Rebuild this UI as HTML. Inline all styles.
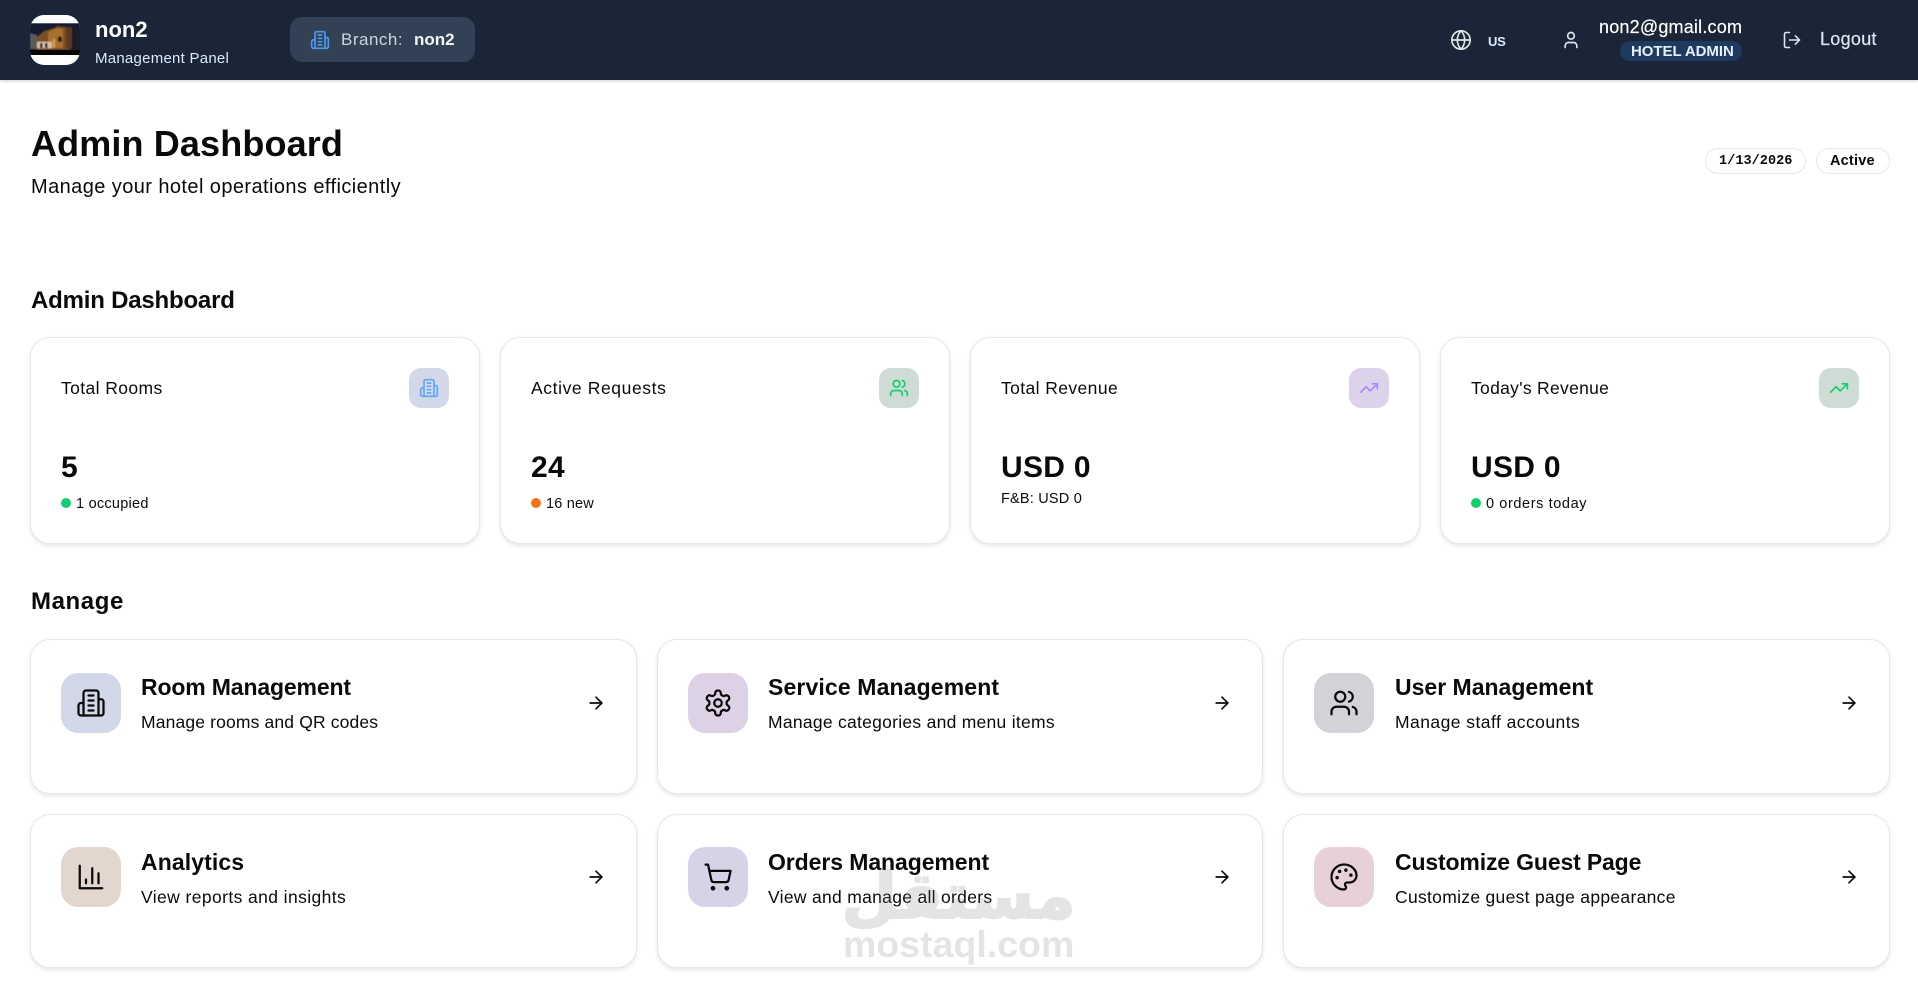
<!DOCTYPE html>
<html lang="en">
<head>
<meta charset="utf-8">
<title>Admin Dashboard</title>
<style>
*{box-sizing:border-box}
html,body{margin:0;padding:0;background:#fff}
body{position:relative;width:1918px;height:985px;overflow:hidden;font-family:"Liberation Sans",sans-serif;color:#0a0a0a}
.t{position:absolute;white-space:nowrap;line-height:1}
.b{font-weight:700}
.hdr{position:absolute;left:0;top:0;width:1918px;height:80px;background:#1a2537;box-shadow:0 1px 3px rgba(0,0,0,.2)}
.pill{position:absolute;left:290px;top:17px;width:185px;height:45px;background:#334155;border-radius:12px}
.badge{position:absolute;left:1620px;top:41px;width:122px;height:20px;background:#1e3a5f;border-radius:10px}
.tag{position:absolute;top:148px;height:26px;border:1px solid #e5e7eb;border-radius:13px;background:#fff}
.card{position:absolute;background:#fff;border:1px solid #e5e7eb;border-radius:20px;box-shadow:0 2px 4px rgba(0,0,0,.1)}
.si{position:absolute;top:368px;width:40px;height:40px;border-radius:12px}
.mi{position:absolute;width:60px;height:60px;border-radius:17px}
.dot{position:absolute;top:498px;width:10px;height:10px;border-radius:50%}
svg.i{position:absolute;fill:none;stroke:currentColor;stroke-linecap:round;stroke-linejoin:round}
.wm{position:absolute;white-space:nowrap;line-height:1;color:#7d7d7d;opacity:.2;font-weight:700}
</style>
</head>
<body>
<svg width="0" height="0" style="position:absolute">
<defs>
<g id="bld"><path d="M6 22V4a2 2 0 0 1 2-2h8a2 2 0 0 1 2 2v18Z"/><path d="M6 12H4a2 2 0 0 0-2 2v6a2 2 0 0 0 2 2h2"/><path d="M18 9h2a2 2 0 0 1 2 2v9a2 2 0 0 1-2 2h-2"/><path d="M10 6h4"/><path d="M10 10h4"/><path d="M10 14h4"/><path d="M10 18h4"/></g>
<g id="usr"><path d="M16 21v-2a4 4 0 0 0-4-4H6a4 4 0 0 0-4 4v2"/><circle cx="9" cy="7" r="4"/><path d="M22 21v-2a4 4 0 0 0-3-3.87"/><path d="M16 3.13a4 4 0 0 1 0 7.75"/></g>
<g id="trd"><polyline points="22 7 13.5 15.5 8.5 10.5 2 17"/><polyline points="16 7 22 7 22 13"/></g>
<g id="arr"><path d="M5 12h14"/><path d="m12 5 7 7-7 7"/></g>
</defs>
</svg>

<div class="hdr"></div>
<svg style="position:absolute;left:30px;top:15px" width="50" height="50" viewBox="0 0 50 50">
<defs>
<clipPath id="lc"><rect width="50" height="50" rx="14"/></clipPath>
<filter id="lb"><feGaussianBlur stdDeviation=".5"/></filter>
</defs>
<g clip-path="url(#lc)">
<rect width="50" height="50" fill="#fff"/>
<rect y="8.3" width="50" height="31.7" fill="#141b33"/>
<g filter="url(#lb)">
<path d="M7 22 L14 16 L24 13 L28 11 L36 12 L40 15 L40 35 L7 35Z" fill="#7a4e24"/>
<path d="M18 17 L27 13 L33 14 L33 33 L18 33Z" fill="#a8702f"/>
<path d="M36 12 L42 12 L42 34 L36 34Z" fill="#5c3b22"/>
<path d="M0 18 L7 20 L7 34 L0 34Z" fill="#5a5a58"/>
<rect x="7" y="26.7" width="15" height="6.6" fill="#cfc0a4"/>
<rect x="10" y="28" width="2.5" height="5" fill="#3a3028"/>
<rect x="15" y="28" width="2.5" height="5" fill="#3a3028"/>
<rect x="28" y="21.7" width="3.7" height="5" fill="#241c18"/>
<rect x="23" y="24" width="2" height="9" fill="#d9a052"/>
<rect x="44" y="14" width="6" height="22" fill="#1c1a2c"/>
</g>
<rect x="0" y="35" width="50" height="5" fill="#090705"/>
</g>
</svg>
<div class="t b" style="left:95px;top:19px;font-size:22px;color:#fff">non2</div>
<div class="t" style="left:95px;top:50.5px;font-size:15px;letter-spacing:.25px;color:#dbeafe">Management Panel</div>

<div class="pill"></div>
<svg class="i" style="left:310px;top:30px;color:#4a9bf0" width="20" height="20" viewBox="0 0 24 24" stroke-width="2"><use href="#bld"/></svg>
<div class="t" style="left:341px;top:31px;font-size:17px;letter-spacing:.5px;color:#cbd5e1">Branch:</div>
<div class="t b" style="left:414px;top:31px;font-size:17px;color:#f1f5f9">non2</div>

<svg class="i" style="left:1450px;top:29px;color:#dce8e4" width="22" height="22" viewBox="0 0 24 24" stroke-width="1.8"><circle cx="12" cy="12" r="10"/><path d="M12 2a14.5 14.5 0 0 0 0 20 14.5 14.5 0 0 0 0-20"/><path d="M2 12h20"/></svg>
<div class="t b" style="left:1488px;top:35px;font-size:13px;letter-spacing:-.3px;color:#dbeafe">US</div>
<svg class="i" style="left:1561px;top:30px;color:#dce4ec" width="20" height="20" viewBox="0 0 24 24" stroke-width="2"><path d="M19 21v-2a4 4 0 0 0-4-4H9a4 4 0 0 0-4 4v2"/><circle cx="12" cy="7" r="4"/></svg>
<div class="t" style="left:1599px;top:18px;font-size:18px;letter-spacing:.2px;color:#fff;-webkit-text-stroke:.2px #fff">non2@gmail.com</div>
<div class="badge"></div>
<div class="t b" style="left:1631px;top:43.5px;font-size:15px;letter-spacing:-.05px;color:#e6f0fa">HOTEL ADMIN</div>
<svg class="i" style="left:1782px;top:30px;color:#dce4ec" width="20" height="20" viewBox="0 0 24 24" stroke-width="1.9"><path d="M9 21H5a2 2 0 0 1-2-2V5a2 2 0 0 1 2-2h4"/><polyline points="16 17 21 12 16 7"/><line x1="21" y1="12" x2="9" y2="12"/></svg>
<div class="t" style="left:1820px;top:30px;font-size:18px;letter-spacing:.3px;color:#e2e8f0;-webkit-text-stroke:.2px #e2e8f0">Logout</div>

<div class="t b" style="left:31px;top:126px;font-size:36px;letter-spacing:.13px">Admin Dashboard</div>
<div class="t" style="left:31px;top:176.5px;font-size:20px;letter-spacing:.42px">Manage your hotel operations efficiently</div>
<div class="tag" style="left:1705px;width:101px"></div>
<div class="t b" style="left:1719px;top:155px;font-size:13.6px;font-family:'Liberation Mono',monospace">1/13/2026</div>
<div class="tag" style="left:1816px;width:74px"></div>
<div class="t b" style="left:1830px;top:154px;font-size:14.5px;letter-spacing:.2px">Active</div>

<div class="t b" style="left:31px;top:289px;font-size:24px;letter-spacing:-.2px">Admin Dashboard</div>

<div class="card" style="left:30px;top:337px;width:450px;height:207px"></div>
<div class="card" style="left:500px;top:337px;width:450px;height:207px"></div>
<div class="card" style="left:970px;top:337px;width:450px;height:207px"></div>
<div class="card" style="left:1440px;top:337px;width:450px;height:207px"></div>

<div class="t" style="left:61px;top:380px;font-size:17.5px;letter-spacing:.4px">Total Rooms</div>
<div class="t" style="left:531px;top:380px;font-size:17.5px;letter-spacing:.6px">Active Requests</div>
<div class="t" style="left:1001px;top:380px;font-size:17.5px;letter-spacing:.4px">Total Revenue</div>
<div class="t" style="left:1471px;top:380px;font-size:17.5px;letter-spacing:.3px">Today's Revenue</div>

<div class="si" style="left:409px;background:#d3d8e8"></div>
<svg class="i" style="left:419px;top:378px;color:#60a5fa" width="20" height="20" viewBox="0 0 24 24" stroke-width="2"><use href="#bld"/></svg>
<div class="si" style="left:879px;background:#cfdcd6"></div>
<svg class="i" style="left:889px;top:378px;color:#10d070" width="20" height="20" viewBox="0 0 24 24" stroke-width="2"><use href="#usr"/></svg>
<div class="si" style="left:1349px;background:#dcd3ea"></div>
<svg class="i" style="left:1359px;top:378px;color:#a78bfa" width="20" height="20" viewBox="0 0 24 24" stroke-width="2"><use href="#trd"/></svg>
<div class="si" style="left:1819px;background:#cfdcd6"></div>
<svg class="i" style="left:1829px;top:378px;color:#10d070" width="20" height="20" viewBox="0 0 24 24" stroke-width="2"><use href="#trd"/></svg>

<div class="t b" style="left:61px;top:453px;font-size:30px;letter-spacing:.3px">5</div>
<div class="t b" style="left:531px;top:453px;font-size:30px;letter-spacing:.3px">24</div>
<div class="t b" style="left:1001px;top:453px;font-size:30px;letter-spacing:.3px">USD 0</div>
<div class="t b" style="left:1471px;top:453px;font-size:30px;letter-spacing:.3px">USD 0</div>

<div class="dot" style="left:61px;background:#10cf6c"></div>
<div class="t" style="left:76px;top:497px;font-size:14.5px;letter-spacing:.25px">1 occupied</div>
<div class="dot" style="left:531px;background:#f97316"></div>
<div class="t" style="left:546px;top:497px;font-size:14.5px;letter-spacing:.2px">16 new</div>
<div class="t" style="left:1001px;top:492px;font-size:14.5px;letter-spacing:.2px">F&amp;B: USD 0</div>
<div class="dot" style="left:1471px;background:#10cf6c"></div>
<div class="t" style="left:1486px;top:497px;font-size:14.5px;letter-spacing:.6px">0 orders today</div>

<div class="t b" style="left:31px;top:590px;font-size:24px;letter-spacing:.6px">Manage</div>

<div class="card" style="left:30px;top:639px;width:607px;height:155px"></div>
<div class="card" style="left:657px;top:639px;width:606px;height:155px"></div>
<div class="card" style="left:1283px;top:639px;width:607px;height:155px"></div>
<div class="card" style="left:30px;top:814px;width:607px;height:154px"></div>
<div class="card" style="left:657px;top:814px;width:606px;height:154px"></div>
<div class="card" style="left:1283px;top:814px;width:607px;height:154px"></div>

<div class="mi" style="left:61px;top:673px;background:#d3d8e8"></div>
<svg class="i" style="left:76px;top:688px" width="30" height="30" viewBox="0 0 24 24" stroke-width="1.8"><use href="#bld"/></svg>
<div class="t b" style="left:141px;top:676px;font-size:23px;letter-spacing:-.15px">Room Management</div>
<div class="t" style="left:141px;top:713.5px;font-size:17.5px;letter-spacing:.15px">Manage rooms and QR codes</div>
<svg class="i" style="left:586px;top:693px" width="20" height="20" viewBox="0 0 24 24" stroke-width="2"><use href="#arr"/></svg>

<div class="mi" style="left:688px;top:673px;background:#ddd1e6"></div>
<svg class="i" style="left:703px;top:688px" width="30" height="30" viewBox="0 0 24 24" stroke-width="1.8"><path d="M12.22 2h-.44a2 2 0 0 0-2 2v.18a2 2 0 0 1-1 1.73l-.43.25a2 2 0 0 1-2 0l-.15-.08a2 2 0 0 0-2.73.73l-.22.38a2 2 0 0 0 .73 2.73l.15.1a2 2 0 0 1 1 1.72v.51a2 2 0 0 1-1 1.74l-.15.09a2 2 0 0 0-.73 2.73l.22.38a2 2 0 0 0 2.73.73l.15-.08a2 2 0 0 1 2 0l.43.25a2 2 0 0 1 1 1.73V20a2 2 0 0 0 2 2h.44a2 2 0 0 0 2-2v-.18a2 2 0 0 1 1-1.73l.43-.25a2 2 0 0 1 2 0l.15.08a2 2 0 0 0 2.73-.73l.22-.39a2 2 0 0 0-.73-2.73l-.15-.08a2 2 0 0 1-1-1.74v-.5a2 2 0 0 1 1-1.74l.15-.09a2 2 0 0 0 .73-2.73l-.22-.38a2 2 0 0 0-2.73-.73l-.15.08a2 2 0 0 1-2 0l-.43-.25a2 2 0 0 1-1-1.73V4a2 2 0 0 0-2-2z"/><circle cx="12" cy="12" r="3"/></svg>
<div class="t b" style="left:768px;top:676px;font-size:23px;letter-spacing:.13px">Service Management</div>
<div class="t" style="left:768px;top:713.5px;font-size:17.5px;letter-spacing:.27px">Manage categories and menu items</div>
<svg class="i" style="left:1212px;top:693px" width="20" height="20" viewBox="0 0 24 24" stroke-width="2"><use href="#arr"/></svg>

<div class="mi" style="left:1314px;top:673px;background:#d1d3d8"></div>
<svg class="i" style="left:1329px;top:688px" width="30" height="30" viewBox="0 0 24 24" stroke-width="1.8"><use href="#usr"/></svg>
<div class="t b" style="left:1395px;top:676px;font-size:23px;letter-spacing:0">User Management</div>
<div class="t" style="left:1395px;top:713.5px;font-size:17.5px;letter-spacing:.45px">Manage staff accounts</div>
<svg class="i" style="left:1839px;top:693px" width="20" height="20" viewBox="0 0 24 24" stroke-width="2"><use href="#arr"/></svg>

<div class="mi" style="left:61px;top:847px;background:#e3d6ce"></div>
<svg class="i" style="left:76px;top:862px" width="30" height="30" viewBox="0 0 24 24" stroke-width="1.8"><path d="M3 3v18h18"/><path d="M18 17V9"/><path d="M13 17V5"/><path d="M8 17v-3"/></svg>
<div class="t b" style="left:141px;top:851px;font-size:23px;letter-spacing:.1px">Analytics</div>
<div class="t" style="left:141px;top:888.5px;font-size:17.5px;letter-spacing:.4px">View reports and insights</div>
<svg class="i" style="left:586px;top:867px" width="20" height="20" viewBox="0 0 24 24" stroke-width="2"><use href="#arr"/></svg>

<div class="mi" style="left:688px;top:847px;background:#d5d4e6"></div>
<svg class="i" style="left:703px;top:862px" width="30" height="30" viewBox="0 0 24 24" stroke-width="1.8"><circle cx="8" cy="21" r="1"/><circle cx="19" cy="21" r="1"/><path d="M2.05 2.05h2l2.66 12.42a2 2 0 0 0 2 1.58h9.78a2 2 0 0 0 1.95-1.57l1.65-7.43H5.12"/></svg>
<div class="t b" style="left:768px;top:851px;font-size:23px;letter-spacing:-.08px">Orders Management</div>
<div class="t" style="left:768px;top:888.5px;font-size:17.5px;letter-spacing:.3px">View and manage all orders</div>
<svg class="i" style="left:1212px;top:867px" width="20" height="20" viewBox="0 0 24 24" stroke-width="2"><use href="#arr"/></svg>

<div class="mi" style="left:1314px;top:847px;background:#e6d0da"></div>
<svg class="i" style="left:1329px;top:862px" width="30" height="30" viewBox="0 0 24 24" stroke-width="1.8"><circle cx="13.5" cy="6.5" r=".5" fill="currentColor"/><circle cx="17.5" cy="10.5" r=".5" fill="currentColor"/><circle cx="8.5" cy="7.5" r=".5" fill="currentColor"/><circle cx="6.5" cy="12.5" r=".5" fill="currentColor"/><path d="M12 2C6.5 2 2 6.5 2 12s4.5 10 10 10c.926 0 1.648-.746 1.648-1.688 0-.437-.18-.835-.437-1.125-.29-.289-.438-.652-.438-1.125a1.64 1.64 0 0 1 1.668-1.668h1.996c3.051 0 5.555-2.503 5.555-5.554C21.965 6.012 17.461 2 12 2z"/></svg>
<div class="t b" style="left:1395px;top:851px;font-size:23px;letter-spacing:-.15px">Customize Guest Page</div>
<div class="t" style="left:1395px;top:888.5px;font-size:17.5px;letter-spacing:.3px">Customize guest page appearance</div>
<svg class="i" style="left:1839px;top:867px" width="20" height="20" viewBox="0 0 24 24" stroke-width="2"><use href="#arr"/></svg>

<div class="wm" style="left:841.5px;top:865px;font-size:64px;font-family:'DejaVu Sans',sans-serif;-webkit-text-stroke:2px #7d7d7d" dir="rtl">مستقل</div>
<div class="wm" style="left:843px;top:926px;font-size:37.5px">mostaql.com</div>
</body>
</html>
